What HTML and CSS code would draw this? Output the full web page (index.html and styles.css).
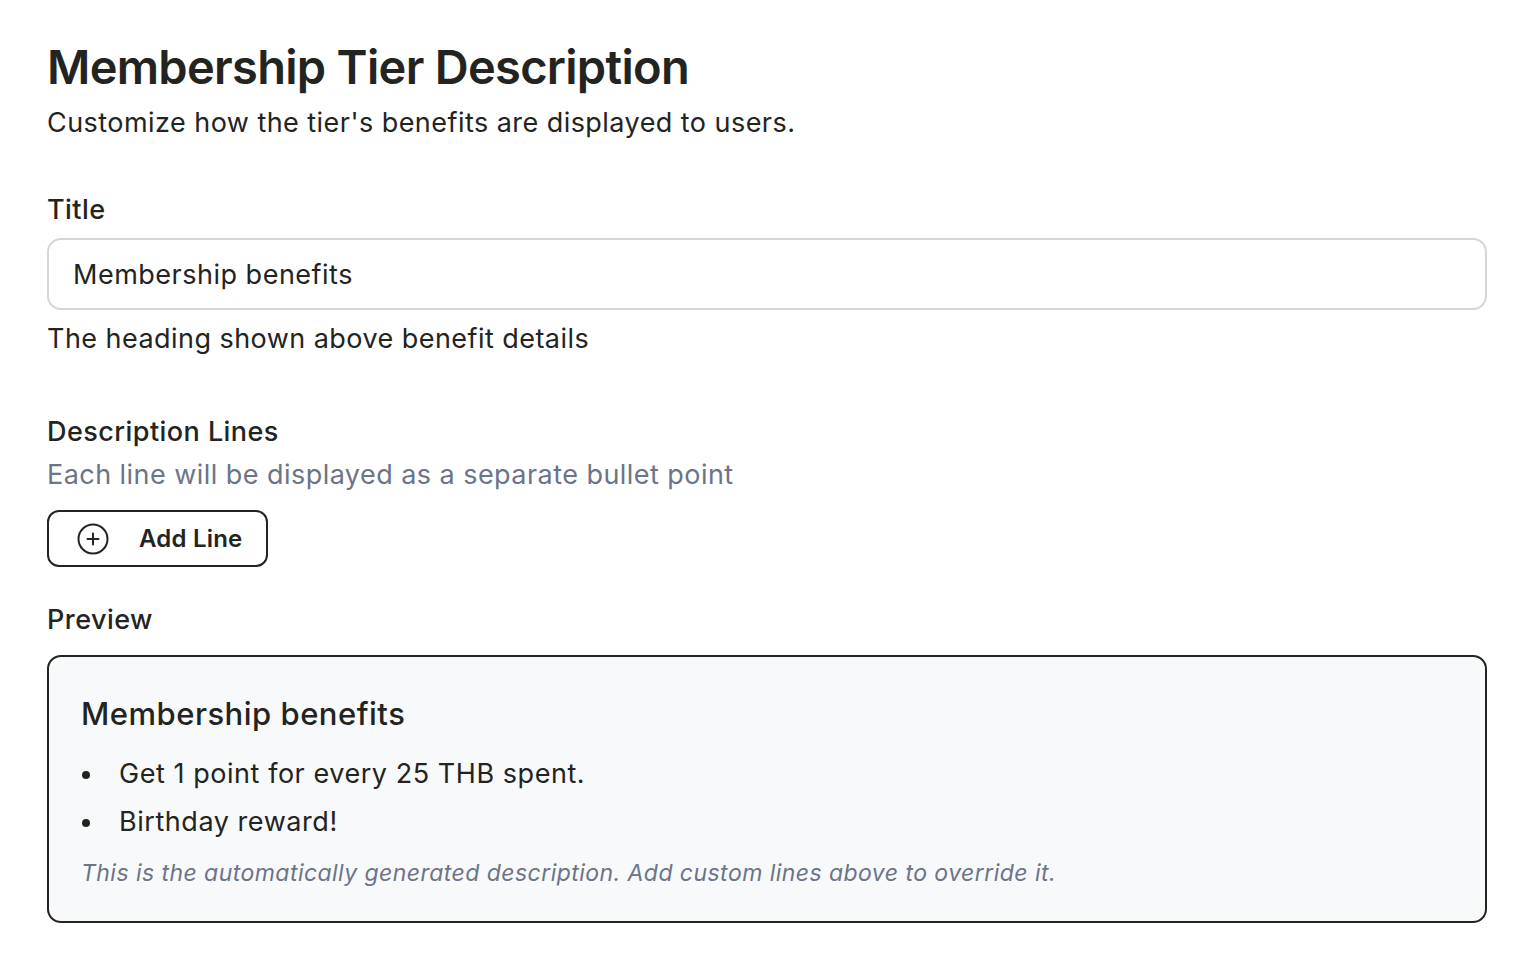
FILE: index.html
```html
<!DOCTYPE html>
<html lang="en">
<head>
<meta charset="utf-8">
<title>Membership Tier Description</title>
<link rel="stylesheet" href="styles.css">
</head>
<body>
<main class="page">
  <header class="head">
    <h1 class="title">Membership Tier Description</h1>
    <p class="subtitle">Customize how the tier's benefits are displayed to users.</p>
  </header>

  <section class="field">
    <label class="label" for="title-input">Title</label>
    <input id="title-input" class="input" type="text" value="Membership benefits">
    <p class="help">The heading shown above benefit details</p>
  </section>

  <section class="lines">
    <h2 class="label">Description Lines</h2>
    <p class="muted">Each line will be displayed as a separate bullet point</p>
    <button class="btn" type="button">
      <svg class="btn-icon" viewBox="0 0 32 32" width="32" height="32" aria-hidden="true">
        <circle cx="16" cy="16" r="14.5" fill="none" stroke="#23241f" stroke-width="2"/>
        <path d="M16 10.5v11M10.5 16h11" stroke="#23241f" stroke-width="2" stroke-linecap="round"/>
      </svg>
      <span>Add Line</span>
    </button>
  </section>

  <section class="preview-sec">
    <h2 class="label">Preview</h2>
    <div class="preview">
      <h3 class="preview-title">Membership benefits</h3>
      <ul class="bullets">
        <li>Get 1 point for every 25 THB spent.</li>
        <li>Birthday reward!</li>
      </ul>
      <p class="note">This is the automatically generated description. Add custom lines above to override it.</p>
    </div>
  </section>
</main>
</body>
</html>
```

FILE: styles.css
```css
* { box-sizing: border-box; }
html, body { margin: 0; padding: 0; background: #ffffff; }
body {
  font-family: Inter, "Noto Sans", "Liberation Sans", sans-serif;
  color: #23241f;
  letter-spacing: 0.45px;
}
.page {
  padding: 36px 43px 0 47px;
  display: flex;
  flex-direction: column;
}
.head { display: flex; flex-direction: column; }
.title {
  margin: 0;
  font-size: 47px;
  font-weight: 600;
  line-height: 62px;
  letter-spacing: -0.7px;
  color: #23241f;
}
.subtitle {
  margin: 5px 0 0;
  font-size: 27px;
  line-height: 40px;
  letter-spacing: 0.45px;
}
.field {
  margin-top: 47px;
  display: flex;
  flex-direction: column;
}
.label {
  display: block;
  margin: 0;
  font-size: 27px;
  font-weight: 500;
  line-height: 40px;
}
.input {
  margin-top: 8px;
  height: 72px;
  width: 100%;
  border: 2px solid #d6d6d6;
  border-radius: 14px;
  padding: 0 24px;
  font-family: inherit;
  font-size: 27px;
  letter-spacing: 0.5px;
  color: #23241f;
  background: #fff;
  outline: none;
}
.help {
  margin: 9px 0 0;
  font-size: 27px;
  line-height: 40px;
}
.lines {
  margin-top: 53px;
  display: flex;
  flex-direction: column;
}
.muted {
  margin: 3px 0 0;
  font-size: 27px;
  line-height: 40px;
  color: #6b7488;
}
.btn {
  margin-top: 15px;
  align-self: flex-start;
  display: flex;
  align-items: center;
  gap: 30px;
  height: 57px;
  padding: 0 24px 0 28px;
  border: 2px solid #23241f;
  border-radius: 12px;
  background: #fff;
  font-family: inherit;
  font-size: 24px;
  font-weight: 600;
  letter-spacing: 0.2px;
  color: #23241f;
}
.btn-icon { width: 32px; height: 32px; flex: none; }
.preview-sec {
  margin-top: 33px;
  display: flex;
  flex-direction: column;
}
.preview {
  margin-top: 15px;
  border: 2px solid #23241f;
  border-radius: 14px;
  background: #f8f9fb;
  padding: 35px 32px 29px;
}
.preview-title {
  margin: 0;
  font-size: 31px;
  font-weight: 500;
  line-height: 44px;
  letter-spacing: 0.5px;
}
.bullets {
  list-style: none;
  margin: 14px 0 0;
  padding: 0;
  font-size: 27px;
  line-height: 48px;
  letter-spacing: 0.55px;
}
.bullets li {
  display: flex;
  align-items: center;
}
.bullets li::before {
  content: "";
  flex: none;
  width: 8px;
  height: 8px;
  margin: 2px 29px 0 1px;
  border-radius: 50%;
  background: #23241f;
}
.note {
  margin: 8px 0 0;
  font-size: 23px;
  line-height: 38px;
  font-style: italic;
  letter-spacing: 0.45px;
  color: #6b7488;
}
```
